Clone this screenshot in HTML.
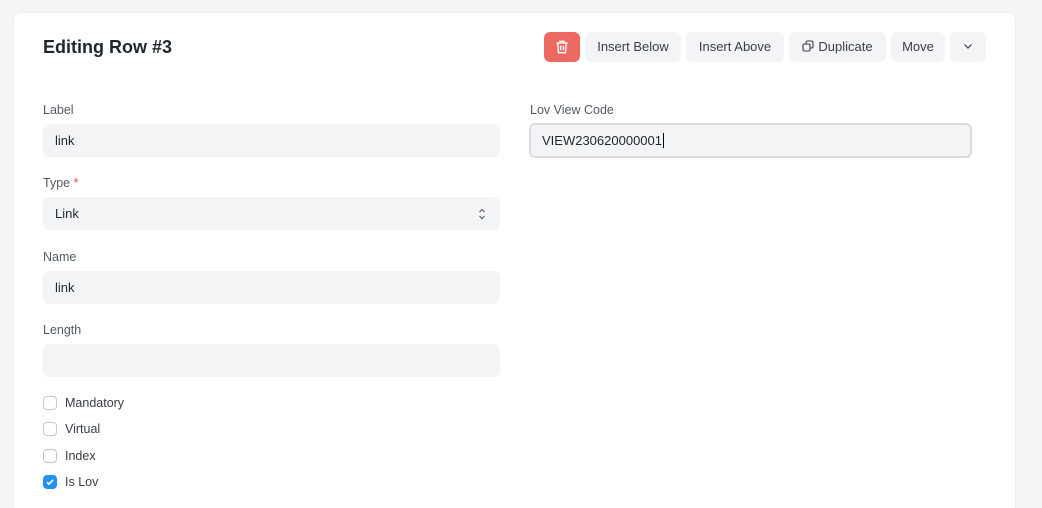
<!DOCTYPE html>
<html><head><style>
*{box-sizing:border-box;margin:0;padding:0}
html,body{width:1042px;height:508px;overflow:hidden}
body{background:#f4f5f6;font-family:"Liberation Sans",Arial,sans-serif;position:relative;color:#1f272e}
.card{position:absolute;left:13px;top:12px;width:1003px;height:510px;background:#fff;border:1px solid #eceef0;border-radius:8px}
.a{position:absolute}
h1{position:absolute;left:43px;top:37px;font-size:18px;font-weight:600;color:#1f272e}
.lbl{position:absolute;font-size:12.5px;color:#525a63}
.inp{position:absolute;left:43px;width:457px;height:33px;background:#f3f4f6;border-radius:6px;font-size:13px;padding:9px 12px;color:#1f272e}
.btn{position:absolute;top:32px;height:30px;background:#f3f4f6;border-radius:6px;font-size:13px;color:#383e45;line-height:30px;text-align:center}
.cb{position:absolute;left:43px;width:14px;height:14px;border:1px solid #c3c8ce;border-radius:4px;background:#fff}
.cl{position:absolute;left:65px;font-size:12.5px;color:#383e45}
</style></head><body>
<div class="card"></div>
<h1>Editing Row #3</h1>
<div class="btn" style="left:544px;width:36px;background:#ec6a62">
<svg width="16" height="16" viewBox="0 0 14 14" style="margin-top:7px" fill="none" stroke="#fff" stroke-width="1.2"><path d="M2 3.5h10M5.2 3.5V2h3.6v1.5M3.3 3.5l.6 8.5h6.2l.6-8.5M5.8 5.8v4M8.2 5.8v4"/></svg></div>
<div class="btn" style="left:585px;width:96px">Insert Below</div>
<div class="btn" style="left:686px;width:98px">Insert Above</div>
<div class="btn" style="left:789px;width:97px"><svg width="12" height="12" viewBox="0 0 12 12" fill="none" stroke="#383e45" stroke-width="1.1" style="vertical-align:-1px;margin-right:4px"><rect x="1" y="4" width="7" height="7" rx="1.5"/><path d="M4 4V2.5A1.5 1.5 0 0 1 5.5 1h4A1.5 1.5 0 0 1 11 2.5v4A1.5 1.5 0 0 1 9.5 8H8"/></svg>Duplicate</div>
<div class="btn" style="left:891px;width:54px">Move</div>
<div class="btn" style="left:950px;width:36px"><svg width="12" height="12" viewBox="0 0 12 12" fill="none" stroke="#383e45" stroke-width="1.2" style="vertical-align:-1px"><path d="M2.5 4.5l3.5 3.5 3.5-3.5"/></svg></div>

<div class="lbl" style="left:43px;top:103px">Label</div>
<div class="inp" style="top:124px">link</div>
<div class="lbl" style="left:43px;top:176px">Type <span style="color:#e24c4c">*</span></div>
<div class="inp" style="top:197px">Link<svg class="a" style="right:14px;top:10px" width="8" height="14" viewBox="0 0 8 14" fill="none" stroke="#525a63" stroke-width="1.1"><path d="M1.5 5l2.5-2.5L6.5 5M1.5 9l2.5 2.5L6.5 9"/></svg></div>
<div class="lbl" style="left:43px;top:250px">Name</div>
<div class="inp" style="top:271px">link</div>
<div class="lbl" style="left:43px;top:323px">Length</div>
<div class="inp" style="top:344px"></div>

<div class="lbl" style="left:530px;top:103px">Lov View Code</div>
<div class="inp" style="left:529px;top:123px;width:443px;height:35px;border:2px solid #d9dcdf;padding:8px 11px">VIEW230620000001<span style="border-left:1px solid #000;margin-left:1px"></span></div>

<div class="cb" style="top:396px"></div><div class="cl" style="top:396px">Mandatory</div>
<div class="cb" style="top:422px"></div><div class="cl" style="top:422px">Virtual</div>
<div class="cb" style="top:449px"></div><div class="cl" style="top:449px">Index</div>
<div class="cb" style="top:475px;background:#2490ef;border-color:#2490ef"><svg width="12" height="12" viewBox="0 0 12 12" fill="none" stroke="#fff" stroke-width="1.6" style="position:absolute;left:0;top:0"><path d="M3 6.2l2 2 4-4.4"/></svg></div><div class="cl" style="top:475px">Is Lov</div>
</body></html>
